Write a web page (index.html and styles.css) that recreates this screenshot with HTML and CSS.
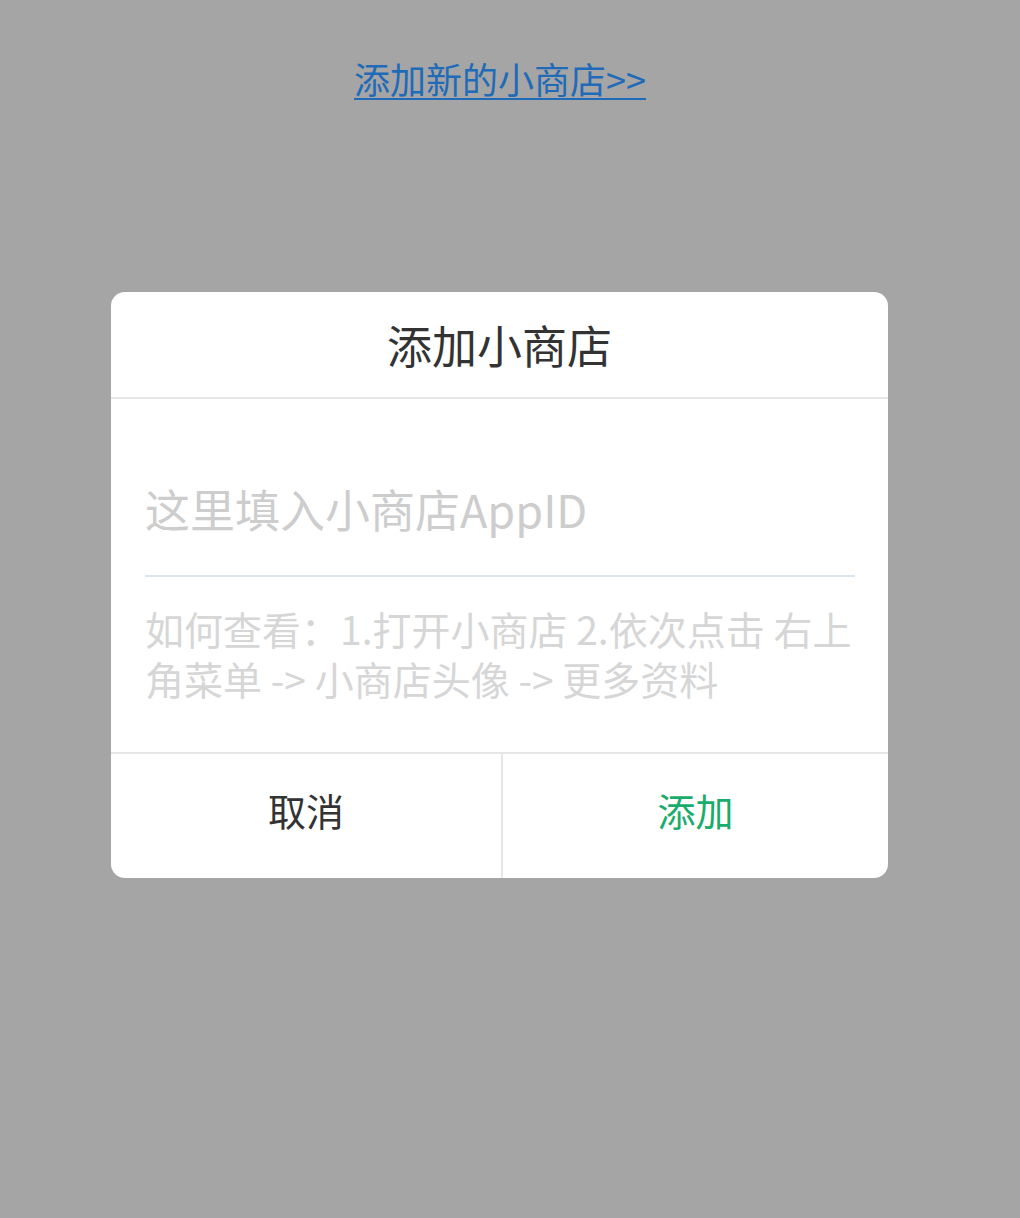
FILE: index.html
```html
<!DOCTYPE html>
<html lang="zh-CN">
<head>
<meta charset="utf-8">
<title>添加小商店</title>
<link rel="stylesheet" href="styles.css">
</head>
<body>
<div class="page">
  <div class="top">
    <a class="add-link" href="#">添加新的小商店&gt;&gt;</a>
  </div>
  <div class="dialog">
    <div class="dialog-header">添加小商店</div>
    <div class="dialog-body">
      <input class="appid-input" type="text" placeholder="这里填入小商店AppID">
      <p class="help">如何查看：1.打开小商店 2.依次点击 右上角菜单 -&gt; 小商店头像 -&gt; 更多资料</p>
    </div>
    <div class="dialog-footer">
      <div class="btn btn-cancel">取消</div>
      <div class="btn btn-ok">添加</div>
    </div>
  </div>
</div>
</body>
</html>
```

FILE: styles.css
```css
html, body {
  margin: 0;
  padding: 0;
  background: #a5a5a5;
  font-family: "Noto Sans CJK SC", "Noto Sans", sans-serif;
}
.page {
  height: 1218px;
}
.top {
  padding: 53px 20px 0 0;
  text-align: center;
  line-height: 50px;
  height: 52px;
}
.add-link {
  font-size: 36px;
  color: #1f6bb8;
  text-decoration: underline;
  text-decoration-thickness: 2px;
  text-underline-offset: 4px;
}
.dialog {
  width: 777px;
  margin: 187px 0 0 111px;
  background: #fff;
  border-radius: 14px;
  overflow: hidden;
}
.dialog-header {
  height: 105px;
  line-height: 105px;
  text-align: center;
  font-size: 45px;
  color: #333;
  border-bottom: 2px solid #e7e7e7;
}
.dialog-body {
  padding: 0 33px 49px 34px;
}
.appid-input {
  display: block;
  width: 100%;
  box-sizing: border-box;
  height: 178px;
  padding: 42px 0 0 0;
  margin: 0;
  border: 0;
  border-bottom: 2px solid #dbe7f0;
  outline: none;
  background: transparent;
  font-family: inherit;
  font-size: 45px;
  color: #333;
}
.appid-input::placeholder {
  color: #cdcdcd;
}
.help {
  margin: 26px 0 0 0;
  font-size: 39px;
  line-height: 50px;
  color: #d6d6d6;
}
.dialog-footer {
  display: flex;
  border-top: 2px solid #e7e7e7;
  height: 124px;
}
.btn {
  flex: 1;
  display: flex;
  align-items: center;
  justify-content: center;
  font-size: 38px;
  padding-bottom: 14px;
  box-sizing: border-box;
}
.btn-cancel {
  color: #333;
  flex: 0 0 390px;
}
.btn-ok {
  color: #1aac6c;
  border-left: 2px solid #e7e7e7;
}
```
